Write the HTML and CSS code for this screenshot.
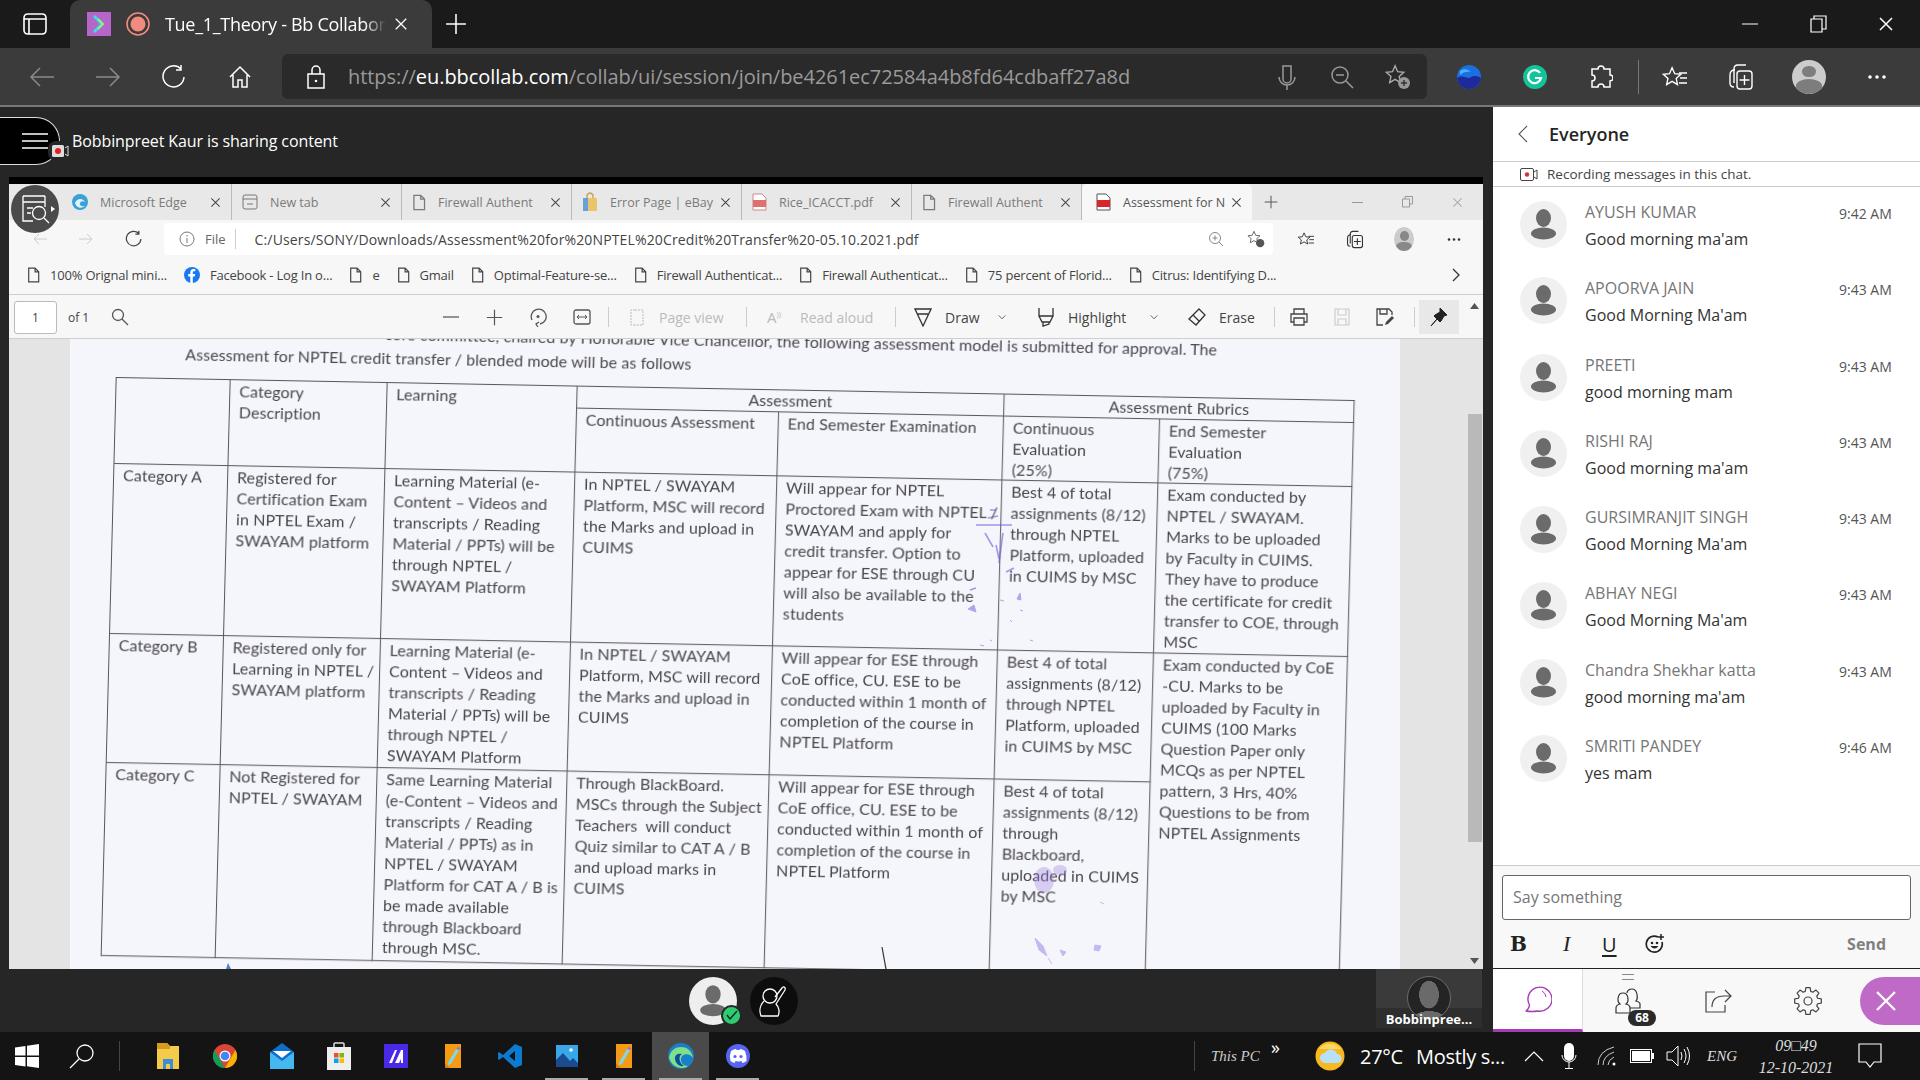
FILE: index.html
```html
<!DOCTYPE html>
<html>
  <head>
    <title>Tue_1_Theory - Bb Collaborate</title>
    <link rel="stylesheet" href="styles.css">
  </head>
  <body>
    <svg class="defs" width="0" height="0">
      <symbol id="doc" viewBox="0 0 16 20"><path d="M2 1.500h8l4.500 4.500v12.500h-12.500zM10 1.500v4.500h4.500" fill="none" stroke="currentColor" stroke-width="1.500"/></symbol>
      <symbol id="x" viewBox="0 0 16 16"><path d="M2 2l12 12M14 2L2 14" fill="none" stroke="currentColor" stroke-width="1.500"/></symbol>
      <symbol id="plus" viewBox="0 0 20 20"><path d="M10 1v18M1 10h18" fill="none" stroke="currentColor" stroke-width="1.400"/></symbol>
      <symbol id="chev" viewBox="0 0 12 8"><path d="M2 1.500l4 4 4-4" fill="none" stroke="currentColor" stroke-width="1.200"/></symbol>
      <symbol id="user" viewBox="0 0 47 47"><ellipse cx="23.500" cy="17" rx="7.500" ry="9" fill="currentColor"/><ellipse cx="23.500" cy="32.500" rx="12.500" ry="6" fill="currentColor"/></symbol>
      <symbol id="star" viewBox="0 0 24 24"><path d="M11 2l2.800 6.400 6.700.6-5 4.500 1.400 6.700L11 16.700 5.100 20.200l1.400-6.700-5-4.500 6.700-.6z" fill="none" stroke="currentColor" stroke-width="1.500"/></symbol>
      <symbol id="pencil" viewBox="0 0 24 36"><path d="M0 0h24v36H0z" fill="#f59a14"/><path d="M0 29l7 7H0z" fill="#d97f0a"/><path d="M5 27L17 7l4 2.500L9 29.500 4.500 32z" fill="#7fd8e8"/><path d="M17 7l2-3 4 2.500-2 3z" fill="#b06ad0"/></symbol>
    </svg>

    <div class="tabstrip">
      <div class="sidetabs">
        <svg width="24" height="22" viewBox="0 0 24 22"><path d="M1 5q0-4 4-4h14q4 0 4 4v12q0 4-4 4H5q-4 0-4-4zM1 6h22M6 6v15" fill="none" stroke="#fff" stroke-width="1.600"/></svg>
      </div>
      <div class="tab">
        <svg width="24" height="24" viewBox="0 0 24 24"><rect width="24" height="24" fill="#b566c8"/><path d="M7 4l8 8-8 8" fill="none" stroke="#36e0e0" stroke-width="3"/><path d="M11 7l5 5-5 5" fill="none" stroke="#8ff07c" stroke-width="2"/></svg>
        <svg width="24" height="24" viewBox="0 0 24 24"><circle cx="12" cy="12" r="11" fill="none" stroke="#f28b7d" stroke-width="1.600"/><circle cx="12" cy="12" r="7.500" fill="#f28b7d"/></svg>
        <span class="tabtitle">Tue_1_Theory - Bb Collaborate</span>
        <svg class="tabx" width="14" height="14"><use href="#x"/></svg>
      </div>
      <svg class="newtab" width="22" height="22"><use href="#plus"/></svg>
      <div class="winctl">
        <span><svg width="16" height="2"><path d="M0 1h16" stroke="#fff"/></svg></span>
        <span><svg width="17" height="18" viewBox="0 0 17 18"><path d="M1 4h11v13H1zM4 4V1h12v13h-4" fill="none" stroke="#fff" stroke-width="1.200"/></svg></span>
        <span><svg width="16" height="16"><use href="#x"/></svg></span>
      </div>
    </div>

    <div class="toolbar">
      <span class="navbtn dim"><svg width="26" height="22" viewBox="0 0 26 22"><path d="M25 11H2M11 2l-9 9 9 9" fill="none" stroke="currentColor" stroke-width="1.500"/></svg></span>
      <span class="navbtn dim"><svg width="26" height="22" viewBox="0 0 26 22"><path d="M1 11h23M15 2l9 9-9 9" fill="none" stroke="currentColor" stroke-width="1.500"/></svg></span>
      <span class="navbtn"><svg width="26" height="26" viewBox="0 0 26 26"><path d="M20 5a10.500 10.500 0 1 0 3 8M20 1v5h-5" fill="none" stroke="currentColor" stroke-width="1.500"/></svg></span>
      <span class="navbtn"><svg width="24" height="24" viewBox="0 0 24 24"><path d="M2 12L12 2l10 10M5 10v12h5v-7h4v7h5V10" fill="none" stroke="currentColor" stroke-width="1.500"/></svg></span>
      <div class="addr">
        <svg width="20" height="24" viewBox="0 0 20 24"><path d="M2 9h16v14H2zM6 9V5a4 4 0 0 1 8 0v4" fill="none" stroke="#fff" stroke-width="1.500"/><circle cx="10" cy="16" r="1.300" fill="#fff"/></svg>
        <span class="url">https://<b>eu.bbcollab.com</b>/collab/ui/session/join/be4261ec72584a4b8fd64cdbaff27a8d</span>
        <div class="addrtools">
          <svg width="24" height="26" viewBox="0 0 24 26"><path d="M8 2h8v13a4 4 0 0 1-8 0zM4 13a8 8 0 0 0 16 0M12 21v5" fill="none" stroke="#999" stroke-width="1.500"/></svg>
          <svg width="24" height="24" viewBox="0 0 24 24"><circle cx="10" cy="10" r="8" fill="none" stroke="#999" stroke-width="1.500"/><path d="M16 16l7 7M6 10h8" stroke="#999" stroke-width="1.500"/></svg>
          <svg class="favadd" width="26" height="26" viewBox="0 0 26 26"><use href="#star" width="22" height="22" color="#aaa"/><circle cx="19" cy="19" r="6" fill="#999"/><path d="M19 16v6M16 19h6" stroke="#333" stroke-width="1.400"/></svg>
        </div>
      </div>
      <span class="extbtn first"><svg width="24" height="24" viewBox="0 0 24 24"><circle cx="12" cy="12" r="12" fill="#1b6fe0"/><path d="M0 13c6-4 10 2 14-1 4-2 7-1 10 1-1 7-6 11-12 11S1 20 0 13z" fill="#1c2a9a"/><path d="M3 6c4-3 8-2 11 1-4-1-8 0-11 3z" fill="#4ab4ff"/></svg></span>
      <span class="extbtn"><svg width="24" height="24" viewBox="0 0 24 24"><circle cx="12" cy="12" r="12" fill="#15c39a"/><path d="M17 8a6.500 6.500 0 1 0 1 5h-6" fill="none" stroke="#fff" stroke-width="2.200"/></svg></span>
      <span class="extbtn"><svg width="24" height="26" viewBox="0 0 24 26"><path d="M9 5a3 3 0 0 1 6 0h6v6a3 3 0 0 1 0 6v6h-6a3 3 0 0 0-6 0H3v-6a3 3 0 0 0 0-6V5z" fill="none" stroke="#fff" stroke-width="1.500"/></svg></span>
      <i class="extsep"></i>
      <span class="extbtn after"><svg width="26" height="24" viewBox="0 0 26 24"><use href="#star" width="22" height="24" color="#fff"/><path d="M17 8h8M18 13h7M17 18h8" stroke="#fff" stroke-width="1.400"/></svg></span>
      <span class="extbtn"><svg width="26" height="28" viewBox="0 0 26 28"><path d="M6 20V6q0-4 4-4h8M7 7q-5 0-5 5v8q0 4 4 4" fill="none" stroke="#fff" stroke-width="1.400"/><rect x="9" y="8" width="15" height="18" rx="3" fill="none" stroke="#fff" stroke-width="1.400"/><path d="M16.500 12v10M11.500 17h10" stroke="#fff" stroke-width="1.400"/></svg></span>
      <span class="extbtn wide"><span class="me"><i></i><b></b></span></span>
      <span class="extbtn"><svg width="20" height="4"><circle cx="3" cy="2" r="1.800" fill="#fff"/><circle cx="10" cy="2" r="1.800" fill="#fff"/><circle cx="17" cy="2" r="1.800" fill="#fff"/></svg></span>
    </div>

    <div class="app">
      <div class="session">
        <div class="menubtn">
          <svg width="26" height="16" viewBox="0 0 26 16"><path d="M0 1h26M0 8h26M0 15h26" stroke="#fff" stroke-width="1.400"/></svg>
          <span class="recbadge"><svg width="18" height="14" viewBox="0 0 18 14"><rect x="1" y="1" width="12" height="12" rx="1.500" fill="#ddd"/><circle cx="7" cy="7" r="3" fill="#e02020"/><path d="M14 4l3-2v10l-3-2" fill="none" stroke="#ddd"/></svg></span>
        </div>
        <div class="sharebar">Bobbinpreet Kaur is sharing content</div>

        <div class="shared">
          <div class="lens">
            <svg width="32" height="32" viewBox="0 0 32 32"><path d="M4 3h22M4 9h22M4 3v25h10M26 3v11M8 15h6M8 20h4" fill="none" stroke="#fff" stroke-width="1.300"/><circle cx="20" cy="20" r="6.500" fill="none" stroke="#fff" stroke-width="1.300"/><path d="M25 25l5 5" stroke="#fff" stroke-width="1.300"/></svg>
            <i></i>
          </div>

          <div class="itabs">
            <div class="itab"><svg width="16" height="16" viewBox="0 0 16 16"><circle cx="8" cy="8" r="8" fill="#3aa0d8"/><path d="M3 9c2-5 8-5 10-1-2-1-4-1-5 1s2 4 5 3c-3 3-9 2-10-3z" fill="#dff3f6"/></svg><span>Microsoft Edge</span><svg class="ix" width="11" height="11"><use href="#x"/></svg></div>
            <div class="itab"><svg width="16" height="16" viewBox="0 0 16 16"><rect x="1" y="1" width="14" height="14" rx="2" fill="none" stroke="#777"/><path d="M1 5h14M5 10h6" stroke="#777"/></svg><span>New tab</span><svg class="ix" width="11" height="11"><use href="#x"/></svg></div>
            <div class="itab"><svg width="14" height="17"><use href="#doc"/></svg><span>Firewall Authent</span><svg class="ix" width="11" height="11"><use href="#x"/></svg></div>
            <div class="itab"><svg width="16" height="20" viewBox="0 0 16 20"><path d="M1 6h14v13H1z" fill="#e8c46a"/><path d="M1 6h5v13H1z" fill="#6aa0d8"/><path d="M5 6V3q3-4 6 0v3" fill="none" stroke="#c8a050" stroke-width="1.400"/></svg><span>Error Page | eBay</span><svg class="ix" width="11" height="11"><use href="#x"/></svg></div>
            <div class="itab"><svg width="15" height="18" viewBox="0 0 15 18"><path d="M1 1h9l4 4v12H1z" fill="#fff" stroke="#c88"/><rect x="1" y="7" width="13" height="7" fill="#e07070"/></svg><span>Rice_ICACCT.pdf</span><svg class="ix" width="11" height="11"><use href="#x"/></svg></div>
            <div class="itab"><svg width="14" height="17"><use href="#doc"/></svg><span>Firewall Authent</span><svg class="ix" width="11" height="11"><use href="#x"/></svg></div>
            <div class="itab active"><svg width="15" height="18" viewBox="0 0 15 18"><path d="M1 1h9l4 4v12H1z" fill="#fff" stroke="#555"/><rect x="1" y="7" width="13" height="7" fill="#d8262c"/></svg><span>Assessment for N</span><svg class="ix" width="11" height="11"><use href="#x"/></svg></div>
            <svg class="inew" width="14" height="14"><use href="#plus"/></svg>
            <div class="iwin">
              <svg width="11" height="1"><path d="M0 .5h11" stroke="#999"/></svg>
              <svg width="11" height="12" viewBox="0 0 11 12"><path d="M.5 3h7v8h-7zM3 3V.5h7.500V8H8" fill="none" stroke="#999"/></svg>
              <svg width="11" height="11" color="#aaa"><use href="#x"/></svg>
            </div>
          </div>

          <div class="iaddr">
            <svg class="inav" width="16" height="14" viewBox="0 0 16 14"><path d="M15 7H2M7 2L2 7l5 5" fill="none" stroke="#ccc"/></svg>
            <svg class="inav" width="16" height="14" viewBox="0 0 16 14"><path d="M1 7h13M9 2l5 5-5 5" fill="none" stroke="#ccc"/></svg>
            <svg class="inav" width="18" height="18" viewBox="0 0 26 26"><path d="M20 5a10.500 10.500 0 1 0 3 8M20 1v5h-5" fill="none" stroke="#444" stroke-width="1.800"/></svg>
            <div class="ibar">
              <svg width="16" height="16" viewBox="0 0 16 16"><circle cx="8" cy="8" r="7" fill="none" stroke="#777"/><path d="M8 7v5M8 4v1.500" stroke="#777"/></svg>
              <span class="ifile">File</span>
              <i class="vsep"></i>
              <span class="ipath">C:/Users/SONY/Downloads/Assessment%20for%20NPTEL%20Credit%20Transfer%20-05.10.2021.pdf</span>
              <div class="ibartools">
                <svg width="16" height="16" viewBox="0 0 16 16"><circle cx="7" cy="7" r="5.500" fill="none" stroke="#888"/><path d="M11 11l4 4M4.500 7h5M7 4.500v5" stroke="#888"/></svg>
                <svg width="18" height="18" viewBox="0 0 26 26" color="#666"><use href="#star" width="22" height="22"/><circle cx="19" cy="19" r="6" fill="#555"/></svg>
              </div>
            </div>
            <svg class="itool" width="18" height="16" viewBox="0 0 26 24" color="#333"><use href="#star" width="22" height="24"/><path d="M17 8h8M18 13h7M17 18h8" stroke="#333" stroke-width="1.400"/></svg>
            <svg class="itool" width="18" height="19" viewBox="0 0 26 28"><path d="M6 20V6q0-4 4-4h8M7 7q-5 0-5 5v8q0 4 4 4" fill="none" stroke="#333" stroke-width="1.600"/><rect x="9" y="8" width="15" height="18" rx="3" fill="none" stroke="#333" stroke-width="1.600"/><path d="M16.500 12v10M11.500 17h10" stroke="#333" stroke-width="1.600"/></svg>
            <span class="ime"><i></i><b></b></span>
            <svg class="idots" width="14" height="3"><circle cx="2" cy="1.500" r="1.300" fill="#333"/><circle cx="7" cy="1.500" r="1.300" fill="#333"/><circle cx="12" cy="1.500" r="1.300" fill="#333"/></svg>
          </div>

          <div class="ibooks">
            <span class="bm"><svg width="13" height="16"><use href="#doc"/></svg>100% Orignal mini...</span>
            <span class="bm"><svg width="16" height="16" viewBox="0 0 16 16"><circle cx="8" cy="8" r="8" fill="#1877f2"/><path d="M8.800 16V9.500h2l.4-2.500H8.800V5.500c0-.8.300-1.200 1.200-1.200h1.300V2.200C10.800 2.100 10.200 2 9.500 2 7.600 2 6.300 3.200 6.300 5.300V7H4.200v2.500h2.100V16z" fill="#fff"/></svg>Facebook - Log In o...</span>
            <span class="bm"><svg width="13" height="16"><use href="#doc"/></svg>e</span>
            <span class="bm"><svg width="13" height="16"><use href="#doc"/></svg>Gmail</span>
            <span class="bm"><svg width="13" height="16"><use href="#doc"/></svg>Optimal-Feature-se...</span>
            <span class="bm"><svg width="13" height="16"><use href="#doc"/></svg>Firewall Authenticat...</span>
            <span class="bm"><svg width="13" height="16"><use href="#doc"/></svg>Firewall Authenticat...</span>
            <span class="bm"><svg width="13" height="16"><use href="#doc"/></svg>75 percent of Florid...</span>
            <span class="bm"><svg width="13" height="16"><use href="#doc"/></svg>Citrus: Identifying D...</span>
            <svg class="bmmore" width="10" height="16" viewBox="0 0 10 16"><path d="M2 2l6 6-6 6" fill="none" stroke="#333" stroke-width="1.300"/></svg>
          </div>

          <div class="pdfbar">
            <span class="pagebox">1</span>
            <span class="ofpages">of 1</span>
            <svg width="18" height="18" viewBox="0 0 18 18"><circle cx="7" cy="7" r="5.500" fill="none" stroke="#555" stroke-width="1.300"/><path d="M11 11l6 6" stroke="#555" stroke-width="1.300"/></svg>
            <svg width="16" height="2"><path d="M0 1h16" stroke="#666" stroke-width="1.400"/></svg>
            <svg width="17" height="17"><use href="#plus" color="#555"/></svg>
            <svg width="18" height="20" viewBox="0 0 18 20"><path d="M3 13A7.500 7.500 0 1 1 11 17M9 20l-2-3 3-2" fill="none" stroke="#555" stroke-width="1.300"/><circle cx="9" cy="9.500" r="1.500" fill="#555"/></svg>
            <svg width="18" height="16" viewBox="0 0 18 16"><rect x="1" y="1" width="16" height="14" rx="2" fill="none" stroke="#555" stroke-width="1.300"/><path d="M4 8h10M6 6L4 8l2 2M12 6l2 2-2 2" fill="none" stroke="#555"/></svg>
            <i class="vsep"></i>
            <span class="pdfbtn off"><svg width="18" height="17" viewBox="0 0 18 17"><path d="M7 1H3v15h4M7 1h8v15H7" fill="none" stroke="#bbb" stroke-dasharray="2 1"/></svg>Page view</span>
            <i class="vsep"></i>
            <span class="pdfbtn off"><span class="biga">A<sup>&#41;&#41;</sup></span>Read aloud</span>
            <i class="vsep"></i>
            <span class="pdfbtn"><svg width="18" height="20" viewBox="0 0 18 20"><path d="M1 2h16L9 19zM4 7h10" fill="none" stroke="#333" stroke-width="1.300"/></svg>Draw</span>
            <svg width="10" height="7"><use href="#chev" color="#666"/></svg>
            <span class="pdfbtn"><svg width="18" height="20" viewBox="0 0 18 20"><path d="M2 1v8h14V1M2 9l3 6h8l3-6M6 15v4l6-2v-2" fill="none" stroke="#333" stroke-width="1.300"/></svg>Highlight</span>
            <svg width="10" height="7"><use href="#chev" color="#666"/></svg>
            <span class="pdfbtn"><svg width="18" height="18" viewBox="0 0 18 18"><path d="M11 1l6 6-9 10-7-6zM5 7l6 6" fill="none" stroke="#333" stroke-width="1.300"/></svg>Erase</span>
            <i class="vsep"></i>
            <svg width="18" height="18" viewBox="0 0 18 18"><path d="M4 6V1h10v5M4 14H1V6h16v8h-3M4 10h10v7H4z" fill="none" stroke="#444" stroke-width="1.300"/></svg>
            <svg width="16" height="18" viewBox="0 0 16 18"><path d="M1 1h14v16H1zM4 1v6h8V1M4 17v-6h8v6" fill="none" stroke="#ccc" stroke-width="1.200"/></svg>
            <svg width="18" height="18" viewBox="0 0 18 18"><path d="M7 17H1V1h12l3 3v3M4 1v5h7V1" fill="none" stroke="#444" stroke-width="1.300"/><path d="M9 17l1-3 6-6 2 2-6 6z" fill="#444"/></svg>
            <i class="vsep"></i>
            <span class="pinbox"><svg width="18" height="20" viewBox="0 0 18 20"><path d="M10 1l7 7-3 1-3 5-1 1-3-3-6 7 6-7-3-3 1-1 5-3z" fill="#222" stroke="#222"/></svg></span>
          </div>

          <div class="doc">
            <div class="page">
              <div class="scan">
                <p class="intro first">core committee, chaired by Honorable Vice Chancellor, the following assessment model is submitted for approval. The</p>
                <p class="intro second">Assessment for NPTEL credit transfer / blended mode will be as follows</p>
                <table>
                  <colgroup><col class="c1"><col class="c2"><col class="c3"><col class="c4"><col class="c5"><col class="c6"><col class="c7"></colgroup>
                  <tr class="h1">
                    <td rowspan="2"></td>
                    <td rowspan="2">Category<br>Description</td>
                    <td rowspan="2">Learning</td>
                    <td colspan="2" class="mid">Assessment</td>
                    <td colspan="2" class="mid">Assessment Rubrics</td>
                  </tr>
                  <tr class="h2">
                    <td>Continuous Assessment</td>
                    <td>End Semester Examination</td>
                    <td>Continuous<br>Evaluation<br>(25%)</td>
                    <td>End Semester<br>Evaluation<br>(75%)</td>
                  </tr>
                  <tr class="ra">
                    <td>Category A</td>
                    <td>Registered for<br>Certification Exam<br>in NPTEL Exam /<br>SWAYAM platform</td>
                    <td>Learning Material (e-<br>Content – Videos and<br>transcripts / Reading<br>Material / PPTs) will be<br>through NPTEL /<br>SWAYAM Platform</td>
                    <td>In NPTEL / SWAYAM<br>Platform, MSC will record<br>the Marks and upload in<br>CUIMS</td>
                    <td>Will appear for NPTEL<br>Proctored Exam with NPTEL /<br>SWAYAM and apply for<br>credit transfer. Option to<br>appear for ESE through CU<br>will also be available to the<br>students</td>
                    <td>Best 4 of total<br>assignments (8/12)<br>through NPTEL<br>Platform, uploaded<br>in CUIMS by MSC</td>
                    <td>Exam conducted by<br>NPTEL / SWAYAM.<br>Marks to be uploaded<br>by Faculty in CUIMS.<br>They have to produce<br>the certificate for credit<br>transfer to COE, through<br>MSC</td>
                  </tr>
                  <tr class="rb">
                    <td>Category B</td>
                    <td>Registered only for<br>Learning in NPTEL /<br>SWAYAM platform</td>
                    <td>Learning Material (e-<br>Content – Videos and<br>transcripts / Reading<br>Material / PPTs) will be<br>through NPTEL /<br>SWAYAM Platform</td>
                    <td>In NPTEL / SWAYAM<br>Platform, MSC will record<br>the Marks and upload in<br>CUIMS</td>
                    <td>Will appear for ESE through<br>CoE office, CU. ESE to be<br>conducted within 1 month of<br>completion of the course in<br>NPTEL Platform</td>
                    <td>Best 4 of total<br>assignments (8/12)<br>through NPTEL<br>Platform, uploaded<br>in CUIMS by MSC</td>
                    <td rowspan="2">Exam conducted by CoE<br>-CU. Marks to be<br>uploaded by Faculty in<br>CUIMS (100 Marks<br>Question Paper only<br>MCQs as per NPTEL<br>pattern, 3 Hrs, 40%<br>Questions to be from<br>NPTEL Assignments</td>
                  </tr>
                  <tr class="rc">
                    <td>Category C</td>
                    <td>Not Registered for<br>NPTEL / SWAYAM</td>
                    <td>Same Learning Material<br>(e-Content – Videos and<br>transcripts / Reading<br>Material / PPTs) as in<br>NPTEL / SWAYAM<br>Platform for CAT A / B is<br>be made available<br>through Blackboard<br>through MSC.</td>
                    <td>Through BlackBoard.<br>MSCs through the Subject<br>Teachers  will conduct<br>Quiz similar to CAT A / B<br>and upload marks in<br>CUIMS</td>
                    <td>Will appear for ESE through<br>CoE office, CU. ESE to be<br>conducted within 1 month of<br>completion of the course in<br>NPTEL Platform</td>
                    <td>Best 4 of total<br>assignments (8/12)<br>through<br>Blackboard,<br>uploaded in CUIMS<br>by MSC</td>
                  </tr>
                </table>
              </div>
            </div>
            <svg class="blots" width="1474" height="630" viewBox="9 339 1474 630">
              <path d="M976 525h36M990 510h6M988 518l10-2M985 533l8 14M1003 533l-4 30M996 545l3 14M970 590l6-2M1006 572l8-4" stroke="#6a58d8" stroke-width="1.600" fill="none" opacity=".6"/>
              <path d="M968 609l6-4 2 7zM1017 599l3-6 1 7zM1000 600l4 1M1030 640l3 1M980 645l4 1M1010 620l2 2M1020 610l3 1M990 640l2 1" fill="#6a58d8" stroke="#6a58d8" opacity=".5"/>
              <ellipse cx="1044" cy="880" rx="10" ry="13" fill="#a080e0" opacity=".35"/>
              <ellipse cx="1060" cy="870" rx="7" ry="5" fill="#a080e0" opacity=".35"/>
              <path d="M1035 938l8 8 4 10-8-6zM1095 945l6 1-2 5-5-1zM1100 902l4 2M1060 950l3 6 3-4zM1048 958l4 6" fill="#8a70e0" stroke="#8a70e0" opacity=".45"/>
              <path d="M882 947l4 22" stroke="#333" stroke-width="1.200"/>
              <path d="M226 969l2-6 3 6z" fill="#4a80d8"/>
            </svg>
            <div class="vscroll">
              <svg width="9" height="6"><path d="M4.500 0l4.500 6H0z" fill="#555"/></svg>
              <i></i>
              <svg width="9" height="6"><path d="M4.500 6L9 0H0z" fill="#555"/></svg>
            </div>
          </div>
        </div>

        <div class="bottombar">
          <div class="bottomtools">
            <span class="selfcam"><svg width="48" height="48"><use href="#user"/></svg>
              <span class="okbadge"><svg width="12" height="10" viewBox="0 0 12 10"><path d="M1 5l3 4 7-8" fill="none" stroke="#123" stroke-width="1.400"/></svg></span>
            </span>
            <span class="handbtn"><svg width="32" height="34" viewBox="0 0 32 34"><circle cx="12" cy="12" r="7" fill="none" stroke="#fff" stroke-width="1.300"/><path d="M6 17c-4 4-5 10-3 15h17c2-4 1-9-2-12l9-14c1-3-2-4-3-2l-7 9" fill="none" stroke="#fff" stroke-width="1.300" stroke-linejoin="round"/></svg></span>
          </div>
          <div class="presenter">
            <span class="thumbcam"></span>
            <span class="thumbname">Bobbinpree...</span>
          </div>
        </div>
      </div>

      <div class="chat">
        <div class="chathead">
          <svg width="10" height="18" viewBox="0 0 10 18"><path d="M9 1L1 9l8 8" fill="none" stroke="#555" stroke-width="1.100"/></svg>
          <span>Everyone</span>
        </div>
        <div class="recnote">
          <svg width="18" height="13" viewBox="0 0 18 13"><rect x=".5" y=".5" width="13" height="12" rx="1.500" fill="none" stroke="#444"/><circle cx="7" cy="6.500" r="2.200" fill="#d83030"/><path d="M14 4l3-2v9l-3-2" fill="none" stroke="#444"/></svg>
          Recording messages in this chat.
        </div>
        <ul class="msgs">
          <li><svg class="ava" width="47" height="47"><use href="#user"/></svg><span class="who">AYUSH KUMAR</span><span class="when">9:42 AM</span><span class="what">Good morning ma'am</span></li>
          <li><svg class="ava" width="47" height="47"><use href="#user"/></svg><span class="who">APOORVA JAIN</span><span class="when">9:43 AM</span><span class="what">Good Morning Ma'am</span></li>
          <li><svg class="ava" width="47" height="47"><use href="#user"/></svg><span class="who">PREETI</span><span class="when">9:43 AM</span><span class="what">good morning mam</span></li>
          <li><svg class="ava" width="47" height="47"><use href="#user"/></svg><span class="who">RISHI RAJ</span><span class="when">9:43 AM</span><span class="what">Good morning ma'am</span></li>
          <li><svg class="ava" width="47" height="47"><use href="#user"/></svg><span class="who">GURSIMRANJIT SINGH</span><span class="when">9:43 AM</span><span class="what">Good Morning Ma'am</span></li>
          <li><svg class="ava" width="47" height="47"><use href="#user"/></svg><span class="who">ABHAY NEGI</span><span class="when">9:43 AM</span><span class="what">Good Morning Ma'am</span></li>
          <li><svg class="ava" width="47" height="47"><use href="#user"/></svg><span class="who">Chandra Shekhar katta</span><span class="when">9:43 AM</span><span class="what">good morning ma'am</span></li>
          <li><svg class="ava" width="47" height="47"><use href="#user"/></svg><span class="who">SMRITI PANDEY</span><span class="when">9:46 AM</span><span class="what">yes mam</span></li>
        </ul>
        <div class="compose">
          <div class="sayinput">Say something</div>
          <div class="fmtrow">
            <span class="fb">B</span>
            <span class="fi">I</span>
            <span class="fu">U</span>
            <svg width="20" height="20" viewBox="0 0 20 20"><path d="M13 3a8 8 0 1 0 4 5" fill="none" stroke="#222" stroke-width="1.700"/><circle cx="7" cy="9" r="1.300" fill="#222"/><circle cx="12" cy="9" r="1.300" fill="#222"/><path d="M5.500 12q4 5 8 0z" fill="#222"/><path d="M16 0v6M13 3h6" stroke="#222" stroke-width="1.500"/></svg>
            <span class="send">Send</span>
          </div>
        </div>
        <div class="chattabs">
          <span class="ctab on"><svg width="28" height="28" viewBox="0 0 28 28"><path d="M2 26q3-2 3.500-6A12 12 0 1 1 14 26q-6 1-12 0z" fill="none" stroke="#a63bb8" stroke-width="1.400" stroke-linejoin="round"/><path d="M18 6a8 8 0 0 1 4 6" fill="none" stroke="#a63bb8"/></svg></span>
          <span class="ctab"><i class="handle"></i><svg width="28" height="26" viewBox="0 0 28 26"><path d="M2 25v-5q0-3 4-4c-3-2-3-11 3-11s6 9 3 11q4 1 4 4v5z" fill="#f8f8f8" stroke="#333" stroke-width="1.200"/><path d="M16 20h10v-4q0-2-4-3c2-2 2-12-4-12-3 0-5 2-5 4" fill="none" stroke="#333" stroke-width="1.200"/></svg><b class="count">68</b></span>
          <span class="ctab"><svg width="28" height="24" viewBox="0 0 28 24"><path d="M11 3H2v20h19v-7" fill="none" stroke="#444" stroke-width="1.200"/><path d="M8 18q0-11 12-11h7M21 1l6 6-6 6" fill="none" stroke="#444" stroke-width="1.200"/></svg></span>
          <span class="ctab"><svg width="28" height="28" viewBox="0 0 28 28"><polygon points="11.240,4.390 11.890,.67 16.110,.67 16.760,4.390 18.840,5.250 21.930,3.080 24.920,6.070 22.750,9.160 23.610,11.240 27.330,11.890 27.330,16.110 23.610,16.760 22.750,18.840 24.920,21.930 21.930,24.920 18.840,22.750 16.760,23.610 16.110,27.330 11.890,27.330 11.240,23.610 9.160,22.750 6.070,24.920 3.080,21.930 5.250,18.840 4.390,16.760 .67,16.110 .67,11.890 4.390,11.240 5.250,9.160 3.080,6.070 6.070,3.080 9.160,5.250" fill="none" stroke="#444" stroke-width="1.200" stroke-linejoin="round"/><circle cx="14" cy="14" r="4" fill="none" stroke="#444" stroke-width="1.200"/></svg></span>
          <span class="leave"><svg width="24" height="24"><use href="#x"/></svg></span>
        </div>
      </div>
    </div>

    <div class="taskbar">
      <span class="tstart"><svg width="24" height="24" viewBox="0 0 24 24"><path d="M0 3.500l10.500-1.500v9.500H0zM12 1.800L24 0v11.500H12zM0 13h10.500v9.500L0 21zM12 13h12v11l-12-1.800z" fill="#fff"/></svg></span>
      <span class="tsearch"><svg width="26" height="26" viewBox="0 0 26 26"><circle cx="16" cy="10" r="8" fill="none" stroke="#fff" stroke-width="1.300"/><path d="M10 16L1 25" stroke="#fff" stroke-width="1.300"/></svg></span>
      <i class="tdiv"></i>
      <div class="tapps">
        <span class="tapp"><svg width="22" height="26" viewBox="0 0 22 26"><path d="M0 0h10l3 3h9v23H0z" fill="#f5c94a"/><path d="M0 0h10l3 3v3H0z" fill="#d89a1c"/><path d="M6 26V16h10v10h-3v-5H9v5z" fill="#3a8fd8"/></svg></span>
        <span class="tapp"><svg width="24" height="24" viewBox="0 0 24 24"><circle cx="12" cy="12" r="12" fill="#db4437"/><path d="M12 24A12 12 0 0 1 1.600 6L7 15.500 12 24z" fill="#0f9d58"/><path d="M12 24l5.500-9.500L22.400 6H12l10.400 0A12 12 0 0 1 12 24z" fill="#f4b400"/><circle cx="12" cy="12" r="5.500" fill="#fff"/><circle cx="12" cy="12" r="4.300" fill="#4285f4"/></svg></span>
        <span class="tapp"><svg width="24" height="26" viewBox="0 0 24 26"><path d="M0 9L12 0l12 9v17H0z" fill="#0c6fc8"/><path d="M0 9l12 9 12-9v17H0z" fill="#45b8f0"/><path d="M3 8h18L12 15z" fill="#fff"/></svg></span>
        <span class="tapp"><svg width="24" height="28" viewBox="0 0 24 28"><path d="M7 5V2q0-1 1-1h8q1 0 1 1v3" fill="none" stroke="#ddd" stroke-width="1.500"/><rect y="5" width="24" height="23" fill="#eee"/><path d="M7 11h4.500v4.500H7z" fill="#f25022"/><path d="M12.500 11H17v4.500h-4.500z" fill="#7fba00"/><path d="M7 16.500h4.500V21H7z" fill="#00a4ef"/><path d="M12.500 16.500H17V21h-4.500z" fill="#ffb900"/></svg></span>
        <span class="tapp"><svg width="24" height="24" viewBox="0 0 24 24"><rect width="24" height="24" fill="#4a2ae8"/><path d="M5 19L11 6h2L8 19zM11 19l6-13h2v13h-2v-4l-2 4z" fill="#fff"/></svg></span>
        <span class="tapp"><svg width="24" height="24"><use href="#pencil"/></svg></span>
        <span class="tapp"><svg width="24" height="24" viewBox="0 0 24 24"><path d="M17 0l7 3v18l-7 3L5 13l-4 3-1-1v-6l1-1 4 3zM17 7l-6 5 6 5z" fill="#0b7ad1"/></svg></span>
        <span class="tapp open"><svg width="22" height="22" viewBox="0 0 22 22"><rect width="22" height="22" fill="#38a8e8"/><path d="M0 22v-7l7-7 7 8 3-3 5 5v4z" fill="#1a4a90"/><circle cx="15" cy="5" r="1.800" fill="#fff"/></svg></span>
        <span class="tapp open"><svg width="24" height="24"><use href="#pencil"/></svg></span>
        <span class="tapp open cur"><svg width="26" height="26" viewBox="0 0 26 26"><circle cx="13" cy="13" r="13" fill="#1a7fc8"/><path d="M1 15c1-8 7-11 12-11 5 0 11 3 12 11-2-4-8-5-11-2-3 4 0 10 6 10-3 3-15 4-19-8z" fill="#7fe08a"/><path d="M7 15c0-4 4-5 7-4-4 2-3 9 2 12-5 1-9-3-9-8z" fill="#0d4f9e"/></svg></span>
        <span class="tapp open"><svg width="24" height="24" viewBox="0 0 24 24"><circle cx="12" cy="12" r="12" fill="#5865f2"/><path d="M5 7q3-2 5-2l.5 1h3l.5-1q2 0 5 2 2 5 1.500 10-2 1.500-4 2l-1-1.500 1.500-1q-4.500 2-9 0l1.500 1-1 1.500q-2-.5-4-2Q3 12 5 7z" fill="#fff"/><circle cx="9" cy="12.500" r="1.600" fill="#5865f2"/><circle cx="15" cy="12.500" r="1.600" fill="#5865f2"/></svg></span>
      </div>
      <div class="tray">
        <i class="tdiv"></i>
        <span class="thispc">This PC</span>
        <span class="more">»</span>
        <svg class="weather" width="30" height="30" viewBox="0 0 30 30"><circle cx="15" cy="15" r="14.500" fill="#f8b820"/><path d="M4 8A14 14 0 0 1 26 8z" fill="#fbd860"/><path d="M10 22a5 5 0 0 1 0-10 6.500 6.500 0 0 1 12 1 4.500 4.500 0 0 1 0 9z" fill="#b8e0f8"/></svg>
        <span class="temp">27°C</span>
        <span class="temp">Mostly s...</span>
        <svg width="20" height="11" viewBox="0 0 20 11"><path d="M1 10l9-9 9 9" fill="none" stroke="#fff" stroke-width="1.200"/></svg>
        <svg width="16" height="26" viewBox="0 0 16 26"><rect x="3" y="0" width="10" height="18" rx="5" fill="#fff"/><path d="M1 12a7 7 0 0 0 14 0M8 19v6M4 25.500h8" fill="none" stroke="#fff"/></svg>
        <svg width="20" height="20" viewBox="0 0 20 20"><path d="M1 19Q1 5 17 1M6 19q0-9 11-13M11 19q0-5 6-8" fill="none" stroke="#ccc"/><circle cx="17" cy="18" r="1.500" fill="#fff"/></svg>
        <svg width="24" height="14" viewBox="0 0 24 14"><rect x=".5" y=".5" width="21" height="13" fill="none" stroke="#fff"/><rect x="2" y="2" width="18" height="10" fill="#fff"/><path d="M22 4h2v6h-2z" fill="#fff"/></svg>
        <svg width="24" height="22" viewBox="0 0 24 22"><path d="M1 7h5l6-6v20l-6-6H1z" fill="none" stroke="#fff"/><path d="M15 7q2 4 0 8M18 4q4 7 0 14M21 2q5 9 0 18" fill="none" stroke="#fff"/></svg>
        <span class="lang">ENG</span>
        <div class="clock"><span>09□49</span><span>12-10-2021</span></div>
        <svg width="24" height="26" viewBox="0 0 24 26"><path d="M1 1h22v18h-7l-4 5-4-5H1z" fill="none" stroke="#fff" stroke-width="1.200"/></svg>
      </div>
    </div>
  </body>
</html>
```

FILE: styles.css
```css
html, body { width: 100%; height: 100%; }
body { margin: 0; overflow: hidden; font-family: "Open Sans", sans-serif; background: #262626; color: #fff; display: flex; flex-direction: column; }
svg { display: block; flex: none; }
p, ul { margin: 0; padding: 0; }
.defs { position: absolute; }

/* edge window */
.tabstrip { height: 48px; background: #1a1a1a; display: flex; align-items: center; flex: none; }
.sidetabs { width: 70px; display: flex; justify-content: center; }
.tab { width: 362px; height: 48px; background: #3b3b3b; border-radius: 10px 10px 0 0; display: flex; align-items: center; padding-left: 17px; box-sizing: border-box; gap: 15px; color: #fff; }
.tabtitle { width: 221px; overflow: hidden; white-space: nowrap; font-size: 18px; letter-spacing: -.3px; -webkit-mask-image: linear-gradient(90deg, #000 90%, transparent); }
.tabx { margin-left: -7px; color: #fff; }
.newtab { margin-left: 13px; }
.winctl { margin-left: auto; display: flex; color: #fff; }
.winctl span { width: 68px; display: flex; justify-content: center; align-items: center; height: 40px; }

.toolbar { height: 57px; background: #3b3b3b; border-bottom: 2px solid #777; display: flex; align-items: center; padding-left: 9px; flex: none; }
.navbtn { width: 66px; display: flex; justify-content: center; color: #fff; }
.navbtn.dim { color: #8a8a8a; }
.addr { width: 1145px; height: 45px; margin: 0 9px; background: #2a2a2a; border-radius: 6px; display: flex; align-items: center; padding: 0 16px 0 24px; box-sizing: border-box; gap: 22px; }
.url { font-size: 20px; color: #9a9a9a; white-space: nowrap; letter-spacing: -.05px; }
.url b { color: #fff; font-weight: 400; }
.addrtools { margin-left: auto; display: flex; align-items: center; gap: 31px; }
.extbtn { width: 66px; display: flex; justify-content: center; align-items: center; }
.extbtn.wide { width: 70px; }
.extbtn.after { margin-left: 3px; }
.extsep { width: 1px; height: 34px; background: #777; margin-left: 4px; }
.me { width: 34px; height: 34px; border-radius: 50%; background: #ccc; overflow: hidden; display: flex; flex-direction: column; align-items: center; }
.me i { width: 14px; height: 15px; margin-top: 6px; background: #7d7d7d; border-radius: 50%; }
.me b { width: 26px; height: 18px; margin-top: 2px; background: #7d7d7d; border-radius: 50%; }

/* collaborate session */
.app { flex: 1; display: flex; min-height: 0; }
.session { width: 1493px; position: relative; display: flex; flex-direction: column; background: #262626; }
.menubtn { position: absolute; left: 0; top: 10px; width: 60px; height: 48px; box-sizing: border-box; background: #000; border: 1px solid #ddd; border-left: none; border-radius: 0 24px 24px 0; display: flex; align-items: center; padding-left: 22px; z-index: 3; }
.recbadge { position: absolute; left: 48px; top: 23px; width: 24px; height: 20px; background: #262626; border-radius: 8px; display: flex; align-items: center; justify-content: center; }
.sharebar { height: 70px; padding-left: 72px; line-height: 68px; font-size: 16px; letter-spacing: -.1px; box-sizing: border-box; flex: none; }

.shared { height: 792px; margin: 0 10px 0 9px; border-top: 7px solid #000; box-sizing: border-box; background: #f7f7f7; position: relative; color: #555; display: flex; flex-direction: column; overflow: hidden; flex: none; }
.lens { position: absolute; left: 2px; top: 1px; width: 48px; height: 48px; border-radius: 50%; background: #4a4a4a; display: flex; align-items: center; justify-content: center; z-index: 2; }
.lens i { position: absolute; right: 4px; top: 21px; border-left: 4px solid #fff; border-top: 3px solid transparent; border-bottom: 3px solid transparent; }

.itabs { height: 36px; background: #e8e8e8; display: flex; align-items: center; padding-left: 53px; flex: none; }
.itab { width: 170px; height: 36px; box-sizing: border-box; padding: 0 10px; display: flex; align-items: center; gap: 12px; font-size: 12.500px; color: #7a7a7a; border-right: 1px solid #bbb; background-clip: padding-box; }
.itab span { flex: 1; white-space: nowrap; overflow: hidden; }
.itab .ix { color: #444; margin-left: -10px; }
.itab.active { background: #f7f7f7; border: none; color: #555; border-radius: 5px 5px 0 0; padding-left: 14px; }
.inew { margin-left: 12px; color: #555; }
.iwin { margin-left: auto; display: flex; gap: 39px; padding-right: 20px; align-items: center; }

.iaddr { height: 36px; padding-top: 2px; box-sizing: border-box; display: flex; align-items: center; flex: none; padding-left: 23px; }
.inav { margin-right: 30px; }
.inav:nth-child(3) { margin-right: 21px; margin-left: 1px; }
.ibar { width: 1109px; height: 32px; background: #fff; display: flex; align-items: center; padding-left: 15px; box-sizing: border-box; border-radius: 4px; gap: 9px; flex: none; }
.ifile { font-size: 13px; color: #666; margin-left: 1px; }
.ipath { font-size: 14px; letter-spacing: .14px; color: #444; white-space: nowrap; margin-left: 10px; }
.vsep { display: block; width: 1px; height: 20px; background: #ccc; }
.ibartools { margin-left: auto; display: flex; gap: 23px; align-items: center; padding-right: 8px; }
.itool { margin-left: 24px; }
.itool + .itool { margin-left: 31px; }
.ime { width: 20px; height: 24px; margin-left: 30px; border-radius: 50%; background: #ccc; overflow: hidden; display: flex; flex-direction: column; align-items: center; }
.ime i { width: 9px; height: 10px; margin-top: 4px; background: #888; border-radius: 50%; }
.ime b { width: 16px; height: 10px; margin-top: 1px; background: #888; border-radius: 50%; }
.idots { margin-left: 33px; }

.ibooks { height: 39px; display: flex; align-items: center; padding-left: 18px; border-bottom: 1px solid #cfcfcf; box-sizing: border-box; gap: 17px; font-size: 13px; color: #444; letter-spacing: -.2px; flex: none; }
.bm { display: flex; align-items: center; gap: 10px; white-space: nowrap; }
.bmmore { margin-left: auto; margin-right: 22px; }

.pdfbar { height: 44px; padding: 1px 0 0 5px; border-bottom: 1px solid #cfcfcf; box-sizing: border-box; display: grid; grid-template-columns: 54px 43px 332px 43px 43px 44px 35px 20px 118px 21px 128px 19px 83px 40px 112px 39px 86px 16px 44px 42px 38px 5px 40px; align-items: center; font-size: 14px; color: #444; flex: none; }
.pagebox { width: 43px; height: 33px; box-sizing: border-box; border: 1px solid #bbb; border-radius: 3px; background: #fff; text-align: center; line-height: 31px; font-size: 12px; }
.ofpages { font-size: 12px; }
.pdfbtn { display: flex; align-items: center; gap: 13px; white-space: nowrap; }
.pdfbtn.off { color: #bbb; }
.biga { font-size: 15px; width: 20px; }
.biga sup { font-size: 8px; }
.pinbox { width: 40px; height: 34px; background: #e8e8e8; display: flex; align-items: center; justify-content: center; }

.doc { flex: 1; position: relative; display: flex; background: #e4e4e4; min-height: 0; }
.page { width: 1330px; margin-left: 61px; background: #f5f5fc; flex: none; overflow: hidden; }
.scan { margin: -22px 0 0 47px; width: 1238px; transform-origin: 0 10px; transform: matrix(1, .0186, -.026, 1, 0, 0); color: #48484c; font-family: Lato, sans-serif; font-size: 16px; letter-spacing: .08px; filter: blur(.3px); }
.intro { line-height: 24px; white-space: nowrap; }
.intro.first { padding-left: 268px; }
.intro.second { padding-left: 69px; margin-bottom: 12px; }
table { table-layout: fixed; border-collapse: collapse; width: 1238px; }
col.c1 { width: 114px; }
col.c2 { width: 157px; }
col.c3 { width: 190px; }
col.c4 { width: 202px; }
col.c5 { width: 225px; }
col.c6 { width: 156px; }
col.c7 { width: 194px; }
td { border: 1px solid #55555a; padding: 0 0 0 9px; vertical-align: top; line-height: 21px; white-space: pre; }
td.mid { text-align: center; padding-left: 0; line-height: 20px; }
tr.h1 { height: 22px; }
tr.h2 { height: 64px; }
tr.ra { height: 170px; }
tr.rb { height: 129px; }
tr.rc { height: 193px; }
.blots { position: absolute; left: 0; top: 0; pointer-events: none; filter: blur(.5px); }
.vscroll { position: absolute; right: 0; top: -41px; width: 17px; height: 670px; display: flex; flex-direction: column; align-items: center; }
.vscroll svg { margin-top: 5px; }
.vscroll i { width: 14px; height: 428px; margin-top: 105px; margin-bottom: 111px; background: #b9b9b9; }

.bottombar { flex: 1; display: grid; grid-template-columns: 1fr auto 1fr; align-items: center; padding: 0 11px 0 5px; }
.bottomtools { grid-column: 2; display: flex; gap: 13px; }
.selfcam { width: 48px; height: 48px; border-radius: 50%; background: #eee; color: #6b6b6b; position: relative; }
.okbadge { position: absolute; right: -5px; bottom: -1px; width: 17px; height: 17px; border-radius: 50%; background: #2ecc71; border: 2px solid #262626; display: flex; align-items: center; justify-content: center; }
.handbtn { width: 48px; height: 48px; border-radius: 50%; background: #0d0d0d; display: flex; align-items: center; justify-content: center; }
.presenter { grid-column: 3; justify-self: end; align-self: start; width: 106px; height: 59px; background: linear-gradient(#3a3a3a 0 39px, #2e2e2e 39px); display: flex; flex-direction: column; align-items: center; }
.thumbcam { width: 44px; height: 44px; margin-top: 7px; box-sizing: border-box; border: 1px solid #6a6a6a; border-radius: 50%; background: radial-gradient(ellipse 10px 14px at 50% 42%, #6a6a6a 97%, transparent), radial-gradient(ellipse 16px 8px at 50% 100%, #6a6a6a 97%, transparent), #242424; }
.thumbname { font-size: 13px; font-weight: 700; line-height: 16px; margin-top: -9px; position: relative; }

/* chat panel */
.chat { width: 427px; background: #fff; color: #333; display: flex; flex-direction: column; }
.chathead { height: 55px; border-bottom: 1px solid #ccc; box-sizing: border-box; display: flex; align-items: center; padding-left: 25px; gap: 21px; font-size: 18px; font-weight: 600; color: #262626; flex: none; }
.recnote { height: 25px; border-bottom: 1px solid #ccc; box-sizing: border-box; display: flex; align-items: center; padding-left: 27px; gap: 9px; font-size: 13.500px; color: #444; flex: none; }
.msgs { flex: 1; list-style-type: none; padding-top: 14px; min-height: 0; }
.msgs li { height: 76.300px; display: grid; grid-template-columns: 65px 254px auto; grid-template-rows: 22px 32px; padding-left: 27px; }
.ava { grid-row: 1 / 3; width: 47px; height: 47px; border-radius: 50%; background: #f0f0f0; color: #6b6b6b; }
.who { font-size: 16px; color: #767676; line-height: 22px; white-space: nowrap; }
.when { font-size: 14px; color: #555; line-height: 26px; }
.what { grid-column: 2 / 4; font-size: 16px; color: #333; line-height: 32px; }
.compose { height: 103px; background: #f8f8f8; border-top: 1px solid #ccc; box-sizing: border-box; padding: 9px 9px 0; flex: none; }
.sayinput { height: 45px; box-sizing: border-box; background: #fff; border: 1px solid #666; border-radius: 3px; padding-left: 10px; line-height: 42px; font-size: 16px; color: #767676; }
.fmtrow { display: flex; align-items: center; height: 48px; padding-left: 8px; }
.fb { font-family: "DejaVu Serif", serif; font-weight: 700; font-size: 20px; width: 46px; color: #222; }
.fi { font-family: "Liberation Serif", serif; font-style: italic; font-size: 22px; width: 45px; padding-left: 7px; box-sizing: border-box; color: #222; }
.fu { font-size: 20px; width: 44px; padding-left: 1px; box-sizing: border-box; color: #222; text-decoration: underline; text-underline-offset: 3px; }
.send { margin-left: auto; margin-right: 25px; font-weight: 700; font-size: 16px; color: #808080; }
.chattabs { height: 64px; border-top: 1px solid #222; box-sizing: border-box; background: #f8f8f8; display: grid; grid-template-columns: repeat(4, 90px) 67px; align-items: center; flex: none; }
.ctab { height: 63px; display: flex; align-items: center; justify-content: center; position: relative; }
.ctab.on { background: #fff; border-bottom: 3px solid #a63bb8; border-right: 1px solid #ddd; box-sizing: border-box; }
.handle { position: absolute; top: 5px; left: 39px; width: 12px; height: 4px; border-top: 1px solid #888; border-bottom: 1px solid #888; }
.count { position: absolute; left: 45px; top: 41px; width: 28px; height: 16px; border-radius: 8px; background: #2a2a2a; color: #fff; font-size: 12px; text-align: center; line-height: 16px; }
.leave { justify-self: end; width: 60px; height: 48px; border-radius: 24px 0 0 24px; background: #c06ac8; color: #fff; display: flex; align-items: center; padding-left: 14px; box-sizing: border-box; }

/* windows taskbar */
.taskbar { height: 48px; background: #141414; display: flex; align-items: center; flex: none; }
.tstart { width: 54px; display: flex; justify-content: center; }
.tsearch { width: 56px; display: flex; justify-content: center; }
.tdiv { display: block; width: 1px; height: 30px; background: #444; }
.tsearch + .tdiv { margin-left: 9px; }
.tapps { display: flex; margin-left: 19px; }
.tapp { width: 57px; height: 48px; display: flex; justify-content: center; align-items: center; position: relative; }
.tapp.open::after { content: ""; position: absolute; left: 7px; right: 7px; bottom: 0; height: 2px; background: #aaa; }
.tapp.cur { background: #4a4a4a; }
.tray { margin-left: auto; height: 48px; display: grid; grid-template-columns: 17px 60px 44px 45px 56px 104px 28px 42px 34px 36px 36px 52px 96px 52px 24px; align-items: center; justify-items: center; }
.tray .tdiv { justify-self: start; }
.thispc { font-family: "Liberation Serif", serif; font-style: italic; font-size: 15px; color: #ccc; white-space: nowrap; justify-self: start; }
.more { font-size: 18px; margin-top: -18px; justify-self: start; }
.weather { justify-self: start; }
.temp { font-size: 20px; white-space: nowrap; justify-self: start; letter-spacing: -.3px; }
.lang { font-family: "Liberation Serif", serif; font-style: italic; font-size: 15px; color: #ddd; }
.clock { display: flex; flex-direction: column; align-items: center; gap: 3px; font-family: "Liberation Serif", serif; font-style: italic; font-size: 16px; line-height: 19px; color: #ddd; }
```
